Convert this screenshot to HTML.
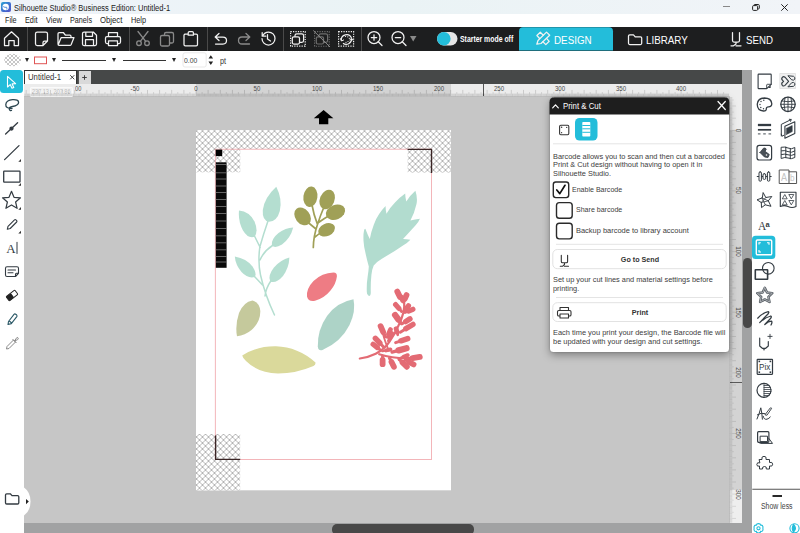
<!DOCTYPE html>
<html><head><meta charset="utf-8"><title>Silhouette Studio</title>
<style>
*{box-sizing:border-box;margin:0;padding:0}
html,body{width:800px;height:533px;overflow:hidden;background:#fff}
body{position:relative;font-family:"Liberation Sans",sans-serif;color:#222}
.a{position:absolute}
.t{position:absolute;white-space:nowrap;transform-origin:0 50%;line-height:1}
svg{position:absolute;overflow:visible}
.ic{fill:none;stroke:#f2f2f2;stroke-width:1.25;stroke-linecap:round;stroke-linejoin:round}
.ig{fill:none;stroke:#8a8a8a;stroke-width:1.3;stroke-linecap:round;stroke-linejoin:round}
.id{fill:none;stroke:#333b42;stroke-width:1.3;stroke-linecap:round;stroke-linejoin:round}
.sep{position:absolute;top:27px;width:1px;height:23.5px;background:#4a4a4a}
.dd{position:absolute;width:0;height:0;border-left:2.7px solid transparent;border-right:2.7px solid transparent;border-top:4.2px solid #222}
</style></head><body>

<!-- TITLE BAR -->
<div class="a" id="titlebar" style="left:0;top:0;width:800px;height:13.700px;background:linear-gradient(90deg,#eff3f9,#eaf3f5 50%,#f1f4f8)"></div>
<div class="a" style="left:1px;top:2px;width:10px;height:9.800px;border-radius:2px;background:linear-gradient(135deg,#2aa3d4,#3f6fd0 55%,#5350c4)"></div>
<svg style="left:1px;top:1.900px" width="10" height="10" viewBox="0 0 10 10"><circle cx="4.700" cy="5" r="3.200" fill="#fff"/><path d="M2.500 4.800Q4 5.800 5.600 5.200Q6.300 6 5.800 7" fill="none" stroke="#3f7fd6" stroke-width=".9" stroke-linecap="round"/></svg>
<span class="t" style="left:14px;top:3.900px;font-size:8.500px;color:#1a1a1a;transform:scaleX(.883)">Silhouette Studio® Business Edition: Untitled-1</span>
<div class="a" style="left:723px;top:6.3px;width:7px;height:1px;background:#888"></div>
<svg style="left:751.5px;top:3.5px" width="8" height="7" viewBox="0 0 8 7"><rect x=".6" y="1.600" width="5" height="4.800" rx="1" fill="none" stroke="#222" stroke-width="1"/><path d="M2 1.600V1.200c0-.4.300-.7.700-.7H6.300c.6 0 1 .4 1 1v2.700c0 .4-.3.700-.7.700H5.800" fill="none" stroke="#222" stroke-width="1"/></svg>
<svg style="left:781px;top:3.600px" width="7" height="7" viewBox="0 0 7 7"><path d="M.3.300l6.400 6.400M6.700.3L.3 6.700" stroke="#222" stroke-width="1" fill="none"/></svg>

<!-- MENU BAR -->
<div class="a" style="left:0;top:13.700px;width:800px;height:13.300px;background:#fff"></div>
<span class="t" style="left:4.500px;top:16.100px;font-size:9px;transform:scaleX(0.8)">File</span>
<span class="t" style="left:24.700px;top:16.100px;font-size:9px;transform:scaleX(0.81)">Edit</span>
<span class="t" style="left:45.600px;top:16.100px;font-size:9px;transform:scaleX(0.82)">View</span>
<span class="t" style="left:70px;top:16.100px;font-size:9px;transform:scaleX(0.8)">Panels</span>
<span class="t" style="left:100px;top:16.100px;font-size:9px;transform:scaleX(0.86)">Object</span>
<span class="t" style="left:131px;top:16.100px;font-size:9px;transform:scaleX(0.81)">Help</span>

<!-- TOOLBAR -->
<div class="a" id="toolbar" style="left:0;top:27px;width:800px;height:23.5px;background:#1d1e1f"></div>
<div class="sep" style="left:27px"></div><div class="sep" style="left:128.500px"></div><div class="sep" style="left:206.500px"></div><div class="sep" style="left:283px"></div><div class="sep" style="left:361px"></div>


<!-- toolbar icons -->
<svg style="left:0;top:0" width="800" height="52" viewBox="0 0 800 52">
<g class="ic">
<path d="M4.500 38.200L11.500 31.800L18.500 38.200V45.500H14.200V40.500H8.800V45.500H4.500Z"/>
<path d="M37.300 32H45.700Q47.500 32 47.500 33.800V41L43 45.500H37.300Q35.500 45.500 35.500 43.700V33.800Q35.500 32 37.300 32ZM47.500 41H44.500Q43 41 43 42.500V45.500"/>
<path d="M58 44.300V33.700Q58 32.500 59.200 32.500H63.300L65.300 35H69.800Q71 35 71 36.200V37.500M58.300 44.600L61.200 37.500H74L71.200 44.500Q70.800 45.400 69.900 45.400H59Q58 45.400 58 44.300"/>
<path d="M84 32H93.300L96.500 35.200V44Q96.500 45.500 95 45.500H84Q82.500 45.500 82.500 44V33.500Q82.500 32 84 32ZM85.800 32.200V36.300H92.500V32.200M85.500 45.300V39.500H93.500V45.300"/>
<path d="M108.500 36.500V32.500H117.500V36.500M108.500 43.500H107Q105.500 43.500 105.500 42V38Q105.500 36.500 107 36.500H119Q120.500 36.500 120.500 38V42Q120.500 43.500 119 43.500H117.500M108.500 40.800H117.500V45.500H108.500Z"/>
<path d="M184.700 34H188M193.500 34H196.200Q197.500 34 197.500 35.300V44.500Q197.500 45.800 196.200 45.800H185.300Q184 45.800 184 44.500V35.300Q184 34 185.300 34M188.200 32.800Q188.200 31.600 189.400 31.600H192.200Q193.400 31.600 193.400 32.800V35.200H188.200Z"/>
<path d="M219 33.500L215.200 37L219 40.500M215.500 37H223Q226.500 37 226.500 40.500Q226.500 44 223 44H215.500"/>
<path d="M267.500 34.500V39L270.500 41M262.500 36Q264.500 32 268.500 32A6.500 6.500 0 1 1 262 38.500M262.200 32.500V36.200H265.800"/>
<circle cx="374" cy="37.500" r="6"/><path d="M378.300 41.800L382 45.500M371.300 37.500H376.700M374 34.800V40.200"/>
<circle cx="398" cy="37.500" r="6"/><path d="M402.300 41.800L406 45.500M395.300 37.500H400.700"/>
</g>
<g class="ig">
<circle cx="139" cy="43.200" r="2.300"/><circle cx="147" cy="43.200" r="2.300"/><path d="M140.300 41.300L148 31.500M145.700 41.300L138 31.500"/>
<rect x="164.500" y="32.500" width="9" height="10.500" rx="1.500"/><rect x="160.500" y="35.500" width="9" height="10.500" rx="1.500" fill="#1e1e1e"/>
<path d="M246 33.500L249.800 37L246 40.500M249.500 37H242Q238.500 37 238.500 40.500Q238.500 44 242 44H249.500"/>
</g>
<!-- group -->
<g fill="none" stroke="#f2f2f2" stroke-width="1.250">
<rect x="290.600" y="31.600" width="14.600" height="14.600" stroke-dasharray="1.200 1.233" stroke-width="1.200"/>
<rect x="295" y="33.800" width="8.600" height="8.600" rx="1.800"/><rect x="292.300" y="36.800" width="7.200" height="7.200" rx="1.500" fill="#1e1e1e"/>
</g>
<g fill="none" stroke="#6e6e6e" stroke-width="1.200">
<rect x="314.600" y="31.600" width="14.600" height="14.600" stroke-dasharray="1.200 1.233" stroke-width="1.100"/>
<rect x="319" y="33.800" width="8.600" height="8.600" rx="1.800"/><rect x="316.300" y="36.800" width="7.200" height="7.200" rx="1.500" fill="#1e1e1e"/>
<path d="M313.300 30.500L330 47" stroke="#8a8a8a" stroke-width="1"/>
</g>
<g fill="none" stroke="#f2f2f2" stroke-width="1.250">
<rect x="338.600" y="31.600" width="15" height="14.600" stroke-dasharray="1.200 1.233" stroke-width="1.200"/>
<path d="M341.300 40.500A5.300 5.300 0 0 1 351.500 38M351.500 38.800A5.300 5.300 0 0 1 343 43.300" stroke-width="1.200"/><path d="M340.300 38.300L341.500 41L344 39.800M349.500 40L351.700 38.300L353 40.500" stroke-width="1"/>
<g fill="#f2f2f2" stroke="none"><circle cx="345.500" cy="36.500" r=".6"/><circle cx="347.800" cy="36.800" r=".6"/><circle cx="349.300" cy="38.300" r=".6"/><circle cx="346" cy="42.300" r=".6"/><circle cx="348" cy="41.500" r=".6"/></g>
</g>
<path d="M410 36H416.500L413.200 41.500Z" fill="#8a8a8a"/>
<!-- toggle -->
<rect x="437" y="32" width="20.500" height="13.600" rx="6.800" fill="#e6e6e6"/><circle cx="443.800" cy="38.800" r="6.800" fill="#23bdda"/>
<!-- design tab -->
<path d="M519 50.500V31.200Q519 27.200 523 27.200H609Q613 27.200 613 31.200V50.500Z" fill="#23bdda"/>
<g class="ic" stroke-width="1.150" stroke="#e6fbff">
<path d="M536.800 44.200L538 40.500L546.500 32.100L549.700 35.200L541 43.500Z"/>
<path d="M539.600 38.500L536.900 35.500L540.300 32.200L543.300 35.200M546.600 38.400L549.200 41.300L545.800 44.600L542.900 41.700"/>
</g>
<!-- library icon -->
<path class="ic" d="M628.500 36Q628.500 34.800 629.700 34.800H633.500L635.200 36.800H640.500Q641.700 36.800 641.700 38V43.300Q641.700 44.500 640.500 44.500H629.700Q628.500 44.500 628.500 43.300Z"/>
<!-- send icon -->
<path class="ic" d="M732.500 32.500V40.500Q732.500 42 734 42H738Q739.500 42 739.500 40.500V32.500M736 42V44L733.500 45.800H731M736 45.800H741" stroke-width="1.300"/>
</svg>
<span class="t" style="left:460px;top:34.500px;font-size:8.500px;font-weight:700;color:#fff;transform:scaleX(.81)">Starter mode off</span>
<span class="t" style="left:554.300px;top:33.800px;font-size:11.700px;color:#fff;transform:scaleX(.84)">DESIGN</span>
<span class="t" style="left:645.500px;top:33.800px;font-size:11.700px;color:#fff;transform:scaleX(.84)">LIBRARY</span>
<span class="t" style="left:745.500px;top:33.800px;font-size:11.700px;color:#fff;transform:scaleX(.83)">SEND</span>

<!-- OPTIONS BAR -->
<div class="a" style="left:0;top:50.500px;width:800px;height:19.500px;background:#fff"></div>


<svg style="left:0;top:0" width="800" height="533" viewBox="0 0 800 533">
<defs>
<pattern id="hx" width="6" height="6" patternUnits="userSpaceOnUse" patternTransform="translate(196.500 131)">
<rect width="6" height="6" fill="#fff"/>
<path d="M-1 -1L7 7M7 -1L-1 7" stroke="#9c9c9c" stroke-width=".75"/>
</pattern>
<pattern id="hx2" width="4" height="4" patternUnits="userSpaceOnUse">
<path d="M0 0L4 4M4 0L0 4" stroke="#b4b4b4" stroke-width=".75"/>
</pattern>
</defs>
<ellipse cx="12.700" cy="60" rx="8.500" ry="6.300" fill="url(#hx2)"/>
<rect x="34.500" y="57" width="12" height="6.700" fill="none" stroke="#e05555" stroke-width="1"/>
<path d="M62 60.500H106M123 60.500H166" stroke="#333" stroke-width="1"/>
<rect x="183" y="52.800" width="23.200" height="14.200" rx="2" fill="#fff" stroke="#e9e9e9" stroke-width="1"/>
<path d="M208.500 58.600L210.800 55.200L213.100 58.600ZM208.500 61.600L210.800 65L213.100 61.600Z" fill="#222"/>
</svg>
<div class="dd" style="left:24.500px;top:58px"></div><div class="dd" style="left:52px;top:58px"></div><div class="dd" style="left:111.500px;top:58px"></div><div class="dd" style="left:171.500px;top:58px"></div>
<span class="t" style="left:184.300px;top:57.200px;font-size:8px;color:#444;transform:scaleX(.85)">0.00</span>
<span class="t" style="left:220px;top:56.500px;font-size:8.500px;color:#333;transform:scaleX(.85)">pt</span>

<!-- TAB BAR -->
<div class="a" style="left:24px;top:70px;width:718.400px;height:13.700px;background:#464848"></div>
<div class="a" style="left:24.200px;top:70px;width:53.300px;height:13.700px;background:#fff;border:1px solid #333;border-bottom:none"></div>
<span class="t" style="left:28px;top:72.600px;font-size:9px;color:#333;transform:scaleX(.86)">Untitled-1</span>
<svg style="left:69.500px;top:74.500px" width="4.500" height="4.500" viewBox="0 0 4.500 4.500"><path d="M.2.200l4.100 4.100M4.300.2L.2 4.300" stroke="#333" stroke-width=".9"/></svg>
<div class="a" style="left:77.500px;top:70.500px;width:13.700px;height:13.200px;background:#d9d9d9;border-left:1px solid #555"></div>
<svg style="left:82px;top:74.500px" width="5" height="5" viewBox="0 0 5 5"><path d="M2.500.2v4.600M.2 2.500h4.600" stroke="#333" stroke-width=".9"/></svg>

<!-- CANVAS -->
<div class="a" id="canvas" style="left:24px;top:83.700px;width:718.400px;height:439.300px;background:#c6c6c6"></div>

<!-- RULERS -->
<div class="a" style="left:24px;top:83.700px;width:705.500px;height:12.700px;background:#ececec"></div>
<div class="a" style="left:196px;top:83.700px;width:255px;height:12.700px;background:#d3d3d3"></div>
<span class="t" style="left:125.4px;top:85.500px;width:20px;text-align:center;font-size:6.600px;color:#4a4a4a;transform-origin:50% 50%;transform:scaleX(.92)">-50</span>
<span class="t" style="left:186.0px;top:85.500px;width:20px;text-align:center;font-size:6.600px;color:#4a4a4a;transform-origin:50% 50%;transform:scaleX(.92)">0</span>
<span class="t" style="left:246.6px;top:85.500px;width:20px;text-align:center;font-size:6.600px;color:#4a4a4a;transform-origin:50% 50%;transform:scaleX(.92)">50</span>
<span class="t" style="left:307.3px;top:85.500px;width:20px;text-align:center;font-size:6.600px;color:#4a4a4a;transform-origin:50% 50%;transform:scaleX(.92)">100</span>
<span class="t" style="left:367.9px;top:85.500px;width:20px;text-align:center;font-size:6.600px;color:#4a4a4a;transform-origin:50% 50%;transform:scaleX(.92)">150</span>
<span class="t" style="left:428.6px;top:85.500px;width:20px;text-align:center;font-size:6.600px;color:#4a4a4a;transform-origin:50% 50%;transform:scaleX(.92)">200</span>
<span class="t" style="left:489.2px;top:85.500px;width:20px;text-align:center;font-size:6.600px;color:#4a4a4a;transform-origin:50% 50%;transform:scaleX(.92)">250</span>
<span class="t" style="left:549.8px;top:85.500px;width:20px;text-align:center;font-size:6.600px;color:#4a4a4a;transform-origin:50% 50%;transform:scaleX(.92)">300</span>
<span class="t" style="left:610.5px;top:85.500px;width:20px;text-align:center;font-size:6.600px;color:#4a4a4a;transform-origin:50% 50%;transform:scaleX(.92)">350</span>
<span class="t" style="left:671.1px;top:85.500px;width:20px;text-align:center;font-size:6.600px;color:#4a4a4a;transform-origin:50% 50%;transform:scaleX(.92)">400</span>
<span class="t" style="left:75px;top:85.500px;font-size:6.300px;color:#555;transform:scaleX(.9)">00</span>
<div class="a" style="left:29.500px;top:86.500px;width:43px;height:10px;background:#f2f2f2;border:1px solid #fafafa;border-radius:1px"></div>
<span class="t" style="left:32px;top:88.500px;font-size:6.300px;color:#bdbdbd;transform:scaleX(.88)">237.13 , 207.86</span>
<div class="a" style="left:483px;top:84px;width:1.300px;height:12.400px;background:#555"></div>
<div class="a" style="left:729.500px;top:83.700px;width:12.900px;height:439.300px;background:#eeeeee"></div>
<div class="a" style="left:729.500px;top:130.300px;width:12.900px;height:360px;background:#d3d3d3"></div>
<div class="a" style="left:729.800px;top:381.600px;width:12.600px;height:1.200px;background:#5a5a5a"></div>
<span class="t" style="left:728.300px;top:126.8px;width:20px;text-align:center;font-size:6.800px;color:#4a4a4a;transform-origin:50% 50%;transform:rotate(90deg) scaleX(.92)">0</span>
<span class="t" style="left:728.300px;top:187.4px;width:20px;text-align:center;font-size:6.800px;color:#4a4a4a;transform-origin:50% 50%;transform:rotate(90deg) scaleX(.92)">50</span>
<span class="t" style="left:728.300px;top:248.1px;width:20px;text-align:center;font-size:6.800px;color:#4a4a4a;transform-origin:50% 50%;transform:rotate(90deg) scaleX(.92)">100</span>
<span class="t" style="left:728.300px;top:308.7px;width:20px;text-align:center;font-size:6.800px;color:#4a4a4a;transform-origin:50% 50%;transform:rotate(90deg) scaleX(.92)">150</span>
<span class="t" style="left:728.300px;top:369.4px;width:20px;text-align:center;font-size:6.800px;color:#4a4a4a;transform-origin:50% 50%;transform:rotate(90deg) scaleX(.92)">200</span>
<span class="t" style="left:728.300px;top:430.0px;width:20px;text-align:center;font-size:6.800px;color:#4a4a4a;transform-origin:50% 50%;transform:rotate(90deg) scaleX(.92)">250</span>
<span class="t" style="left:728.300px;top:490.6px;width:20px;text-align:center;font-size:6.800px;color:#4a4a4a;transform-origin:50% 50%;transform:rotate(90deg) scaleX(.92)">300</span>
<div class="a" style="left:742.400px;top:70px;width:9.900px;height:463px;background:#a1a2a3"></div>
<div class="a" style="left:24px;top:523px;width:728.300px;height:10px;background:#a1a2a3"></div>
<div class="a" style="left:743px;top:258px;width:9.300px;height:69.500px;background:#484848;border-radius:4.600px"></div>
<div class="a" style="left:331.500px;top:523.500px;width:142.500px;height:11px;background:#484848;border-radius:5px"></div>

<svg style="left:0;top:0" width="800" height="533" viewBox="0 0 800 533"><path d="M25.0 96.400v-2.8M26.2 96.400v-6.5M27.4 96.400v-2.8M28.6 96.400v-2.8M29.8 96.400v-2.8M31.1 96.400v-2.8M32.3 96.400v-4.2M33.5 96.400v-2.8M34.7 96.400v-2.8M35.9 96.400v-2.8M37.1 96.400v-2.8M38.3 96.400v-6.5M39.5 96.400v-2.8M40.8 96.400v-2.8M42.0 96.400v-2.8M43.2 96.400v-2.8M44.4 96.400v-4.2M45.6 96.400v-2.8M46.8 96.400v-2.8M48.0 96.400v-2.8M49.3 96.400v-2.8M50.5 96.400v-6.5M51.7 96.400v-2.8M52.9 96.400v-2.8M54.1 96.400v-2.8M55.3 96.400v-2.8M56.5 96.400v-4.2M57.7 96.400v-2.8M59.0 96.400v-2.8M60.2 96.400v-2.8M61.4 96.400v-2.8M62.6 96.400v-6.5M63.8 96.400v-2.8M65.0 96.400v-2.8M66.2 96.400v-2.8M67.4 96.400v-2.8M68.7 96.400v-4.2M69.9 96.400v-2.8M71.1 96.400v-2.8M72.3 96.400v-2.8M73.5 96.400v-2.8M74.7 96.400v-6.5M75.9 96.400v-2.8M77.1 96.400v-2.8M78.4 96.400v-2.8M79.6 96.400v-2.8M80.8 96.400v-4.2M82.0 96.400v-2.8M83.2 96.400v-2.8M84.4 96.400v-2.8M85.6 96.400v-2.8M86.8 96.400v-6.5M88.1 96.400v-2.8M89.3 96.400v-2.8M90.5 96.400v-2.8M91.7 96.400v-2.8M92.9 96.400v-4.2M94.1 96.400v-2.8M95.3 96.400v-2.8M96.6 96.400v-2.8M97.8 96.400v-2.8M99.0 96.400v-6.5M100.2 96.400v-2.8M101.4 96.400v-2.8M102.6 96.400v-2.8M103.8 96.400v-2.8M105.0 96.400v-4.2M106.3 96.400v-2.8M107.5 96.400v-2.8M108.7 96.400v-2.8M109.9 96.400v-2.8M111.1 96.400v-6.5M112.3 96.400v-2.8M113.5 96.400v-2.8M114.7 96.400v-2.8M116.0 96.400v-2.8M117.2 96.400v-4.2M118.4 96.400v-2.8M119.6 96.400v-2.8M120.8 96.400v-2.8M122.0 96.400v-2.8M123.2 96.400v-6.5M124.4 96.400v-2.8M125.7 96.400v-2.8M126.9 96.400v-2.8M128.1 96.400v-2.8M129.3 96.400v-4.2M130.5 96.400v-2.8M131.7 96.400v-2.8M132.9 96.400v-2.8M134.1 96.400v-2.8M135.4 96.400v-6.5M136.6 96.400v-2.8M137.8 96.400v-2.8M139.0 96.400v-2.8M140.2 96.400v-2.8M141.4 96.400v-4.2M142.6 96.400v-2.8M143.8 96.400v-2.8M145.1 96.400v-2.8M146.3 96.400v-2.8M147.5 96.400v-6.5M148.7 96.400v-2.8M149.9 96.400v-2.8M151.1 96.400v-2.8M152.3 96.400v-2.8M153.6 96.400v-4.2M154.8 96.400v-2.8M156.0 96.400v-2.8M157.2 96.400v-2.8M158.4 96.400v-2.8M159.6 96.400v-6.5M160.8 96.400v-2.8M162.0 96.400v-2.8M163.3 96.400v-2.8M164.5 96.400v-2.8M165.7 96.400v-4.2M166.9 96.400v-2.8M168.1 96.400v-2.8M169.3 96.400v-2.8M170.5 96.400v-2.8M171.7 96.400v-6.5M173.0 96.400v-2.8M174.2 96.400v-2.8M175.4 96.400v-2.8M176.6 96.400v-2.8M177.8 96.400v-4.2M179.0 96.400v-2.8M180.2 96.400v-2.8M181.4 96.400v-2.8M182.7 96.400v-2.8M183.9 96.400v-6.5M185.1 96.400v-2.8M186.3 96.400v-2.8M187.5 96.400v-2.8M188.7 96.400v-2.8M189.9 96.400v-4.2M191.1 96.400v-2.8M192.4 96.400v-2.8M193.6 96.400v-2.8M194.8 96.400v-2.8M196.0 96.400v-6.5M197.2 96.400v-2.8M198.4 96.400v-2.8M199.6 96.400v-2.8M200.9 96.400v-2.8M202.1 96.400v-4.2M203.3 96.400v-2.8M204.5 96.400v-2.8M205.7 96.400v-2.8M206.9 96.400v-2.8M208.1 96.400v-6.5M209.3 96.400v-2.8M210.6 96.400v-2.8M211.8 96.400v-2.8M213.0 96.400v-2.8M214.2 96.400v-4.2M215.4 96.400v-2.8M216.6 96.400v-2.8M217.8 96.400v-2.8M219.0 96.400v-2.8M220.3 96.400v-6.5M221.5 96.400v-2.8M222.7 96.400v-2.8M223.9 96.400v-2.8M225.1 96.400v-2.8M226.3 96.400v-4.2M227.5 96.400v-2.8M228.7 96.400v-2.8M230.0 96.400v-2.8M231.2 96.400v-2.8M232.4 96.400v-6.5M233.6 96.400v-2.8M234.8 96.400v-2.8M236.0 96.400v-2.8M237.2 96.400v-2.8M238.4 96.400v-4.2M239.7 96.400v-2.8M240.9 96.400v-2.8M242.1 96.400v-2.8M243.3 96.400v-2.8M244.5 96.400v-6.5M245.7 96.400v-2.8M246.9 96.400v-2.8M248.2 96.400v-2.8M249.4 96.400v-2.8M250.6 96.400v-4.2M251.8 96.400v-2.8M253.0 96.400v-2.8M254.2 96.400v-2.8M255.4 96.400v-2.8M256.6 96.400v-6.5M257.9 96.400v-2.8M259.1 96.400v-2.8M260.3 96.400v-2.8M261.5 96.400v-2.8M262.7 96.400v-4.2M263.9 96.400v-2.8M265.1 96.400v-2.8M266.3 96.400v-2.8M267.6 96.400v-2.8M268.8 96.400v-6.5M270.0 96.400v-2.8M271.2 96.400v-2.8M272.4 96.400v-2.8M273.6 96.400v-2.8M274.8 96.400v-4.2M276.0 96.400v-2.8M277.3 96.400v-2.8M278.5 96.400v-2.8M279.7 96.400v-2.8M280.9 96.400v-6.5M282.1 96.400v-2.8M283.3 96.400v-2.8M284.5 96.400v-2.8M285.7 96.400v-2.8M287.0 96.400v-4.2M288.2 96.400v-2.8M289.4 96.400v-2.8M290.6 96.400v-2.8M291.8 96.400v-2.8M293.0 96.400v-6.5M294.2 96.400v-2.8M295.4 96.400v-2.8M296.7 96.400v-2.8M297.9 96.400v-2.8M299.1 96.400v-4.2M300.3 96.400v-2.8M301.5 96.400v-2.8M302.7 96.400v-2.8M303.9 96.400v-2.8M305.2 96.400v-6.5M306.4 96.400v-2.8M307.6 96.400v-2.8M308.8 96.400v-2.8M310.0 96.400v-2.8M311.2 96.400v-4.2M312.4 96.400v-2.8M313.6 96.400v-2.8M314.9 96.400v-2.8M316.1 96.400v-2.8M317.3 96.400v-6.5M318.5 96.400v-2.8M319.7 96.400v-2.8M320.9 96.400v-2.8M322.1 96.400v-2.8M323.3 96.400v-4.2M324.6 96.400v-2.8M325.8 96.400v-2.8M327.0 96.400v-2.8M328.2 96.400v-2.8M329.4 96.400v-6.5M330.6 96.400v-2.8M331.8 96.400v-2.8M333.0 96.400v-2.8M334.3 96.400v-2.8M335.5 96.400v-4.2M336.7 96.400v-2.8M337.9 96.400v-2.8M339.1 96.400v-2.8M340.3 96.400v-2.8M341.5 96.400v-6.5M342.7 96.400v-2.8M344.0 96.400v-2.8M345.2 96.400v-2.8M346.4 96.400v-2.8M347.6 96.400v-4.2M348.8 96.400v-2.8M350.0 96.400v-2.8M351.2 96.400v-2.8M352.5 96.400v-2.8M353.7 96.400v-6.5M354.9 96.400v-2.8M356.1 96.400v-2.8M357.3 96.400v-2.8M358.5 96.400v-2.8M359.7 96.400v-4.2M360.9 96.400v-2.8M362.2 96.400v-2.8M363.4 96.400v-2.8M364.6 96.400v-2.8M365.8 96.400v-6.5M367.0 96.400v-2.8M368.2 96.400v-2.8M369.4 96.400v-2.8M370.6 96.400v-2.8M371.9 96.400v-4.2M373.1 96.400v-2.8M374.3 96.400v-2.8M375.5 96.400v-2.8M376.7 96.400v-2.8M377.9 96.400v-6.5M379.1 96.400v-2.8M380.3 96.400v-2.8M381.6 96.400v-2.8M382.8 96.400v-2.8M384.0 96.400v-4.2M385.2 96.400v-2.8M386.4 96.400v-2.8M387.6 96.400v-2.8M388.8 96.400v-2.8M390.0 96.400v-6.5M391.3 96.400v-2.8M392.5 96.400v-2.8M393.7 96.400v-2.8M394.9 96.400v-2.8M396.1 96.400v-4.2M397.3 96.400v-2.8M398.5 96.400v-2.8M399.8 96.400v-2.8M401.0 96.400v-2.8M402.2 96.400v-6.5M403.4 96.400v-2.8M404.6 96.400v-2.8M405.8 96.400v-2.8M407.0 96.400v-2.8M408.2 96.400v-4.2M409.5 96.400v-2.8M410.7 96.400v-2.8M411.9 96.400v-2.8M413.1 96.400v-2.8M414.3 96.400v-6.5M415.5 96.400v-2.8M416.7 96.400v-2.8M417.9 96.400v-2.8M419.2 96.400v-2.8M420.4 96.400v-4.2M421.6 96.400v-2.8M422.8 96.400v-2.8M424.0 96.400v-2.8M425.2 96.400v-2.8M426.4 96.400v-6.5M427.6 96.400v-2.8M428.9 96.400v-2.8M430.1 96.400v-2.8M431.3 96.400v-2.8M432.5 96.400v-4.2M433.7 96.400v-2.8M434.9 96.400v-2.8M436.1 96.400v-2.8M437.3 96.400v-2.8M438.6 96.400v-6.5M439.8 96.400v-2.8M441.0 96.400v-2.8M442.2 96.400v-2.8M443.4 96.400v-2.8M444.6 96.400v-4.2M445.8 96.400v-2.8M447.0 96.400v-2.8M448.3 96.400v-2.8M449.5 96.400v-2.8M450.7 96.400v-6.5M451.9 96.400v-2.8M453.1 96.400v-2.8M454.3 96.400v-2.8M455.5 96.400v-2.8M456.8 96.400v-4.2M458.0 96.400v-2.8M459.2 96.400v-2.8M460.4 96.400v-2.8M461.6 96.400v-2.8M462.8 96.400v-6.5M464.0 96.400v-2.8M465.2 96.400v-2.8M466.5 96.400v-2.8M467.7 96.400v-2.8M468.9 96.400v-4.2M470.1 96.400v-2.8M471.3 96.400v-2.8M472.5 96.400v-2.8M473.7 96.400v-2.8M474.9 96.400v-6.5M476.2 96.400v-2.8M477.4 96.400v-2.8M478.6 96.400v-2.8M479.8 96.400v-2.8M481.0 96.400v-4.2M482.2 96.400v-2.8M483.4 96.400v-2.8M484.6 96.400v-2.8M485.9 96.400v-2.8M487.1 96.400v-6.5M488.3 96.400v-2.8M489.5 96.400v-2.8M490.7 96.400v-2.8M491.9 96.400v-2.8M493.1 96.400v-4.2M494.3 96.400v-2.8M495.6 96.400v-2.8M496.8 96.400v-2.8M498.0 96.400v-2.8M499.2 96.400v-6.5M500.4 96.400v-2.8M501.6 96.400v-2.8M502.8 96.400v-2.8M504.1 96.400v-2.8M505.3 96.400v-4.2M506.5 96.400v-2.8M507.7 96.400v-2.8M508.9 96.400v-2.8M510.1 96.400v-2.8M511.3 96.400v-6.5M512.5 96.400v-2.8M513.8 96.400v-2.8M515.0 96.400v-2.8M516.2 96.400v-2.8M517.4 96.400v-4.2M518.6 96.400v-2.8M519.8 96.400v-2.8M521.0 96.400v-2.8M522.2 96.400v-2.8M523.5 96.400v-6.5M524.7 96.400v-2.8M525.9 96.400v-2.8M527.1 96.400v-2.8M528.3 96.400v-2.8M529.5 96.400v-4.2M530.7 96.400v-2.8M531.9 96.400v-2.8M533.2 96.400v-2.8M534.4 96.400v-2.8M535.6 96.400v-6.5M536.8 96.400v-2.8M538.0 96.400v-2.8M539.2 96.400v-2.8M540.4 96.400v-2.8M541.6 96.400v-4.2M542.9 96.400v-2.8M544.1 96.400v-2.8M545.3 96.400v-2.8M546.5 96.400v-2.8M547.7 96.400v-6.5M548.9 96.400v-2.8M550.1 96.400v-2.8M551.4 96.400v-2.8M552.6 96.400v-2.8M553.8 96.400v-4.2M555.0 96.400v-2.8M556.2 96.400v-2.8M557.4 96.400v-2.8M558.6 96.400v-2.8M559.8 96.400v-6.5M561.1 96.400v-2.8M562.3 96.400v-2.8M563.5 96.400v-2.8M564.7 96.400v-2.8M565.9 96.400v-4.2M567.1 96.400v-2.8M568.3 96.400v-2.8M569.5 96.400v-2.8M570.8 96.400v-2.8M572.0 96.400v-6.5M573.2 96.400v-2.8M574.4 96.400v-2.8M575.6 96.400v-2.8M576.8 96.400v-2.8M578.0 96.400v-4.2M579.2 96.400v-2.8M580.5 96.400v-2.8M581.7 96.400v-2.8M582.9 96.400v-2.8M584.1 96.400v-6.5M585.3 96.400v-2.8M586.5 96.400v-2.8M587.7 96.400v-2.8M588.9 96.400v-2.8M590.2 96.400v-4.2M591.4 96.400v-2.8M592.6 96.400v-2.8M593.8 96.400v-2.8M595.0 96.400v-2.8M596.2 96.400v-6.5M597.4 96.400v-2.8M598.6 96.400v-2.8M599.9 96.400v-2.8M601.1 96.400v-2.8M602.3 96.400v-4.2M603.5 96.400v-2.8M604.7 96.400v-2.8M605.9 96.400v-2.8M607.1 96.400v-2.8M608.4 96.400v-6.5M609.6 96.400v-2.8M610.8 96.400v-2.8M612.0 96.400v-2.8M613.2 96.400v-2.8M614.4 96.400v-4.2M615.6 96.400v-2.8M616.8 96.400v-2.8M618.1 96.400v-2.8M619.3 96.400v-2.8M620.5 96.400v-6.5M621.7 96.400v-2.8M622.9 96.400v-2.8M624.1 96.400v-2.8M625.3 96.400v-2.8M626.5 96.400v-4.2M627.8 96.400v-2.8M629.0 96.400v-2.8M630.2 96.400v-2.8M631.4 96.400v-2.8M632.6 96.400v-6.5M633.8 96.400v-2.8M635.0 96.400v-2.8M636.2 96.400v-2.8M637.5 96.400v-2.8M638.7 96.400v-4.2M639.9 96.400v-2.8M641.1 96.400v-2.8M642.3 96.400v-2.8M643.5 96.400v-2.8M644.7 96.400v-6.5M645.9 96.400v-2.8M647.2 96.400v-2.8M648.4 96.400v-2.8M649.6 96.400v-2.8M650.8 96.400v-4.2M652.0 96.400v-2.8M653.2 96.400v-2.8M654.4 96.400v-2.8M655.7 96.400v-2.8M656.9 96.400v-6.5M658.1 96.400v-2.8M659.3 96.400v-2.8M660.5 96.400v-2.8M661.7 96.400v-2.8M662.9 96.400v-4.2M664.1 96.400v-2.8M665.4 96.400v-2.8M666.6 96.400v-2.8M667.8 96.400v-2.8M669.0 96.400v-6.5M670.2 96.400v-2.8M671.4 96.400v-2.8M672.6 96.400v-2.8M673.8 96.400v-2.8M675.1 96.400v-4.2M676.3 96.400v-2.8M677.5 96.400v-2.8M678.7 96.400v-2.8M679.9 96.400v-2.8M681.1 96.400v-6.5M682.3 96.400v-2.8M683.5 96.400v-2.8M684.8 96.400v-2.8M686.0 96.400v-2.8M687.2 96.400v-4.2M688.4 96.400v-2.8M689.6 96.400v-2.8M690.8 96.400v-2.8M692.0 96.400v-2.8M693.2 96.400v-6.5M694.5 96.400v-2.8M695.7 96.400v-2.8M696.9 96.400v-2.8M698.1 96.400v-2.8M699.3 96.400v-4.2M700.5 96.400v-2.8M701.7 96.400v-2.8M703.0 96.400v-2.8M704.2 96.400v-2.8M705.4 96.400v-6.5M706.6 96.400v-2.8M707.8 96.400v-2.8M709.0 96.400v-2.8M710.2 96.400v-2.8M711.4 96.400v-4.2M712.7 96.400v-2.8M713.9 96.400v-2.8M715.1 96.400v-2.8M716.3 96.400v-2.8M717.5 96.400v-6.5M718.7 96.400v-2.8M719.9 96.400v-2.8M721.1 96.400v-2.8M722.4 96.400v-2.8M723.6 96.400v-4.2M724.8 96.400v-2.8M726.0 96.400v-2.8M727.2 96.400v-2.8M728.4 96.400v-2.8" stroke="#000" stroke-opacity=".26" stroke-width=".55" fill="none"/><path d="M729.500 97.6h2.8M729.500 98.8h2.8M729.500 100.0h4.2M729.500 101.2h2.8M729.500 102.4h2.8M729.500 103.6h2.8M729.500 104.8h2.8M729.500 106.0h6.5M729.500 107.3h2.8M729.500 108.5h2.8M729.500 109.7h2.8M729.500 110.9h2.8M729.500 112.1h4.2M729.500 113.3h2.8M729.500 114.5h2.8M729.500 115.7h2.8M729.500 117.0h2.8M729.500 118.2h6.5M729.500 119.4h2.8M729.500 120.6h2.8M729.500 121.8h2.8M729.500 123.0h2.8M729.500 124.2h4.2M729.500 125.4h2.8M729.500 126.7h2.8M729.500 127.9h2.8M729.500 129.1h2.8M729.500 130.3h6.5M729.500 131.5h2.8M729.500 132.7h2.8M729.500 133.9h2.8M729.500 135.2h2.8M729.500 136.4h4.2M729.500 137.6h2.8M729.500 138.8h2.8M729.500 140.0h2.8M729.500 141.2h2.8M729.500 142.4h6.5M729.500 143.6h2.8M729.500 144.9h2.8M729.500 146.1h2.8M729.500 147.3h2.8M729.500 148.5h4.2M729.500 149.7h2.8M729.500 150.9h2.8M729.500 152.1h2.8M729.500 153.3h2.8M729.500 154.6h6.5M729.500 155.8h2.8M729.500 157.0h2.8M729.500 158.2h2.8M729.500 159.4h2.8M729.500 160.6h4.2M729.500 161.8h2.8M729.500 163.0h2.8M729.500 164.3h2.8M729.500 165.5h2.8M729.500 166.7h6.5M729.500 167.9h2.8M729.500 169.1h2.8M729.500 170.3h2.8M729.500 171.5h2.8M729.500 172.7h4.2M729.500 174.0h2.8M729.500 175.2h2.8M729.500 176.4h2.8M729.500 177.6h2.8M729.500 178.8h6.5M729.500 180.0h2.8M729.500 181.2h2.8M729.500 182.5h2.8M729.500 183.7h2.8M729.500 184.9h4.2M729.500 186.1h2.8M729.500 187.3h2.8M729.500 188.5h2.8M729.500 189.7h2.8M729.500 190.9h6.5M729.500 192.2h2.8M729.500 193.4h2.8M729.500 194.6h2.8M729.500 195.8h2.8M729.500 197.0h4.2M729.500 198.2h2.8M729.500 199.4h2.8M729.500 200.6h2.8M729.500 201.9h2.8M729.500 203.1h6.5M729.500 204.3h2.8M729.500 205.5h2.8M729.500 206.7h2.8M729.500 207.9h2.8M729.500 209.1h4.2M729.500 210.3h2.8M729.500 211.6h2.8M729.500 212.8h2.8M729.500 214.0h2.8M729.500 215.2h6.5M729.500 216.4h2.8M729.500 217.6h2.8M729.500 218.8h2.8M729.500 220.0h2.8M729.500 221.3h4.2M729.500 222.5h2.8M729.500 223.7h2.8M729.500 224.9h2.8M729.500 226.1h2.8M729.500 227.3h6.5M729.500 228.5h2.8M729.500 229.7h2.8M729.500 231.0h2.8M729.500 232.2h2.8M729.500 233.4h4.2M729.500 234.6h2.8M729.500 235.8h2.8M729.500 237.0h2.8M729.500 238.2h2.8M729.500 239.5h6.5M729.500 240.7h2.8M729.500 241.9h2.8M729.500 243.1h2.8M729.500 244.3h2.8M729.500 245.5h4.2M729.500 246.7h2.8M729.500 247.9h2.8M729.500 249.2h2.8M729.500 250.4h2.8M729.500 251.6h6.5M729.500 252.8h2.8M729.500 254.0h2.8M729.500 255.2h2.8M729.500 256.4h2.8M729.500 257.6h4.2M729.500 258.9h2.8M729.500 260.1h2.8M729.500 261.3h2.8M729.500 262.5h2.8M729.500 263.7h6.5M729.500 264.9h2.8M729.500 266.1h2.8M729.500 267.3h2.8M729.500 268.6h2.8M729.500 269.8h4.2M729.500 271.0h2.8M729.500 272.2h2.8M729.500 273.4h2.8M729.500 274.6h2.8M729.500 275.8h6.5M729.500 277.0h2.8M729.500 278.3h2.8M729.500 279.5h2.8M729.500 280.7h2.8M729.500 281.9h4.2M729.500 283.1h2.8M729.500 284.3h2.8M729.500 285.5h2.8M729.500 286.8h2.8M729.500 288.0h6.5M729.500 289.2h2.8M729.500 290.4h2.8M729.500 291.6h2.8M729.500 292.8h2.8M729.500 294.0h4.2M729.500 295.2h2.8M729.500 296.5h2.8M729.500 297.7h2.8M729.500 298.9h2.8M729.500 300.1h6.5M729.500 301.3h2.8M729.500 302.5h2.8M729.500 303.7h2.8M729.500 304.9h2.8M729.500 306.2h4.2M729.500 307.4h2.8M729.500 308.6h2.8M729.500 309.8h2.8M729.500 311.0h2.8M729.500 312.2h6.5M729.500 313.4h2.8M729.500 314.6h2.8M729.500 315.9h2.8M729.500 317.1h2.8M729.500 318.3h4.2M729.500 319.5h2.8M729.500 320.7h2.8M729.500 321.9h2.8M729.500 323.1h2.8M729.500 324.3h6.5M729.500 325.6h2.8M729.500 326.8h2.8M729.500 328.0h2.8M729.500 329.2h2.8M729.500 330.4h4.2M729.500 331.6h2.8M729.500 332.8h2.8M729.500 334.1h2.8M729.500 335.3h2.8M729.500 336.5h6.5M729.500 337.7h2.8M729.500 338.9h2.8M729.500 340.1h2.8M729.500 341.3h2.8M729.500 342.5h4.2M729.500 343.8h2.8M729.500 345.0h2.8M729.500 346.2h2.8M729.500 347.4h2.8M729.500 348.6h6.5M729.500 349.8h2.8M729.500 351.0h2.8M729.500 352.2h2.8M729.500 353.5h2.8M729.500 354.7h4.2M729.500 355.9h2.8M729.500 357.1h2.8M729.500 358.3h2.8M729.500 359.5h2.8M729.500 360.7h6.5M729.500 361.9h2.8M729.500 363.2h2.8M729.500 364.4h2.8M729.500 365.6h2.8M729.500 366.8h4.2M729.500 368.0h2.8M729.500 369.2h2.8M729.500 370.4h2.8M729.500 371.6h2.8M729.500 372.9h6.5M729.500 374.1h2.8M729.500 375.3h2.8M729.500 376.5h2.8M729.500 377.7h2.8M729.500 378.9h4.2M729.500 380.1h2.8M729.500 381.3h2.8M729.500 382.6h2.8M729.500 383.8h2.8M729.500 385.0h6.5M729.500 386.2h2.8M729.500 387.4h2.8M729.500 388.6h2.8M729.500 389.8h2.8M729.500 391.1h4.2M729.500 392.3h2.8M729.500 393.5h2.8M729.500 394.7h2.8M729.500 395.9h2.8M729.500 397.1h6.5M729.500 398.3h2.8M729.500 399.5h2.8M729.500 400.8h2.8M729.500 402.0h2.8M729.500 403.2h4.2M729.500 404.4h2.8M729.500 405.6h2.8M729.500 406.8h2.8M729.500 408.0h2.8M729.500 409.2h6.5M729.500 410.5h2.8M729.500 411.7h2.8M729.500 412.9h2.8M729.500 414.1h2.8M729.500 415.3h4.2M729.500 416.5h2.8M729.500 417.7h2.8M729.500 418.9h2.8M729.500 420.2h2.8M729.500 421.4h6.5M729.500 422.6h2.8M729.500 423.8h2.8M729.500 425.0h2.8M729.500 426.2h2.8M729.500 427.4h4.2M729.500 428.6h2.8M729.500 429.9h2.8M729.500 431.1h2.8M729.500 432.3h2.8M729.500 433.5h6.5M729.500 434.7h2.8M729.500 435.9h2.8M729.500 437.1h2.8M729.500 438.4h2.8M729.500 439.6h4.2M729.500 440.8h2.8M729.500 442.0h2.8M729.500 443.2h2.8M729.500 444.4h2.8M729.500 445.6h6.5M729.500 446.8h2.8M729.500 448.1h2.8M729.500 449.3h2.8M729.500 450.5h2.8M729.500 451.7h4.2M729.500 452.9h2.8M729.500 454.1h2.8M729.500 455.3h2.8M729.500 456.5h2.8M729.500 457.8h6.5M729.500 459.0h2.8M729.500 460.2h2.8M729.500 461.4h2.8M729.500 462.6h2.8M729.500 463.8h4.2M729.500 465.0h2.8M729.500 466.2h2.8M729.500 467.5h2.8M729.500 468.7h2.8M729.500 469.9h6.5M729.500 471.1h2.8M729.500 472.3h2.8M729.500 473.5h2.8M729.500 474.7h2.8M729.500 475.9h4.2M729.500 477.2h2.8M729.500 478.4h2.8M729.500 479.6h2.8M729.500 480.8h2.8M729.500 482.0h6.5M729.500 483.2h2.8M729.500 484.4h2.8M729.500 485.7h2.8M729.500 486.9h2.8M729.500 488.1h4.2M729.500 489.3h2.8M729.500 490.5h2.8M729.500 491.7h2.8M729.500 492.9h2.8M729.500 494.1h6.5M729.500 495.4h2.8M729.500 496.6h2.8M729.500 497.8h2.8M729.500 499.0h2.8M729.500 500.2h4.2M729.500 501.4h2.8M729.500 502.6h2.8M729.500 503.8h2.8M729.500 505.1h2.8M729.500 506.3h6.5M729.500 507.5h2.8M729.500 508.7h2.8M729.500 509.9h2.8M729.500 511.1h2.8M729.500 512.3h4.2M729.500 513.5h2.8M729.500 514.8h2.8M729.500 516.0h2.8M729.500 517.2h2.8M729.500 518.4h6.5M729.500 519.6h2.8M729.500 520.8h2.8M729.500 522.0h2.8" stroke="#000" stroke-opacity=".2" stroke-width=".55" fill="none"/></svg>
<!-- LEFT TOOLS -->
<div class="a" style="left:0;top:69.500px;width:24px;height:463.500px;background:#fff"></div>
<div class="a" style="left:0;top:69.600px;width:23.400px;height:23.400px;background:#23bdda;border-radius:3.500px"></div>
<svg style="left:0;top:0" width="32" height="533" viewBox="0 0 32 533">
<path d="M7.500 76.300V87L10.200 84.600L12 88.300L13.800 87.500L12.100 83.900L15.600 83.700Z" fill="none" stroke="#fff" stroke-width="1.100" stroke-linejoin="round"/>
<g class="id">
<path d="M12 108.500Q5.500 108.500 5.800 104.500Q6.200 100.300 12.500 99.700Q18.500 99.300 18.600 102.300Q18.600 105.500 12.500 106.500Q9 107 9.300 109Q9.800 111 11.500 110.500" stroke="#2c4650"/>
<path d="M5.600 134L17.600 122.800" /><circle cx="11.500" cy="128.600" r="1.500" fill="#333b42"/>
<path d="M4.600 159.600L19 145.600"/>
<rect x="3.700" y="171.200" width="16.300" height="11" rx=".5"/>
<path d="M11.500 191.300L14 197.300L20.500 197.800L15.600 202L17.100 208.300L11.500 204.900L5.900 208.300L7.400 202L2.500 197.800L9 197.300Z" stroke-width="1.200"/>
<path d="M7.300 229.300L8 226.300L14.500 219.800Q15.200 219.200 15.900 219.800L16.700 220.600Q17.300 221.300 16.700 222L10.200 228.500Z" stroke-width="1.100"/>
<path d="M17 242.300V253.500" stroke-width="1"/>
<path d="M7 266.800H17Q18.500 266.800 18.500 268.300V273.300L15.500 276.500H7Q5.500 276.500 5.500 275V268.300Q5.500 266.800 7 266.800ZM18.500 273.300H16.500Q15.500 273.300 15.500 274.300V276.500M8 270H15.500M8 272.800H13" stroke-width="1.100"/>
</g>
<path d="M18.300 161.800H21V159.100ZM18.300 185.800H21V183.100ZM18.300 209.800H21V207.100ZM18.300 233.500H21V230.800Z" fill="#333"/>
<!-- eraser -->
<g transform="rotate(-38 12 295.500)"><rect x="6.500" y="292.800" width="11" height="5.400" rx="1" fill="#fff" stroke="#222" stroke-width="1"/><rect x="6.500" y="292.800" width="6" height="5.400" rx="1" fill="#222"/></g>
<!-- knife -->
<path d="M8 324.500L8.500 321.500L14 314.300Q14.800 313.500 15.700 314.200L16.700 315Q17.400 315.800 16.800 316.600L11.300 323.600ZM9 320.800L12 323.200" fill="none" stroke="#2a5866" stroke-width="1.100" stroke-linejoin="round"/>
<!-- eyedropper -->
<path d="M6.500 349L7 346.500L13.500 340L15.500 342L9 348.500ZM12.500 339L16.500 343M14.500 341L16.300 338.200Q17 337 18 337.800Q18.800 338.700 17.700 339.600Z" fill="none" stroke="#8a8a8a" stroke-width="1" stroke-linejoin="round"/>
<!-- bottom bump -->
<path d="M24 487.500Q30.500 492 30.500 501.500Q30.500 511 24 515.500Z" fill="#fff"/>
<path d="M26 499L28.800 501.600L26 504.200Z" fill="#222"/>
<path class="id" d="M5.500 495Q5.500 493.800 6.700 493.800H10.300L12 495.600H17.600Q18.800 495.600 18.800 496.800V502.800Q18.800 504 17.600 504H6.700Q5.500 504 5.500 502.800Z" stroke-width="1.100"/>
</svg>
<span class="t" style="left:6.300px;top:242px;font-family:'Liberation Serif',serif;font-size:13px;color:#333b42">A</span>

<!-- PAGE -->
<svg style="left:0;top:0" width="800" height="533" viewBox="0 0 800 533">
<path d="M313.800 118.200L323.600 110L333.400 118.200H328.300V124.300H319V118.200Z" fill="#000"/>
<rect x="196" y="130.300" width="255" height="360" fill="#fff"/>
<path d="M196 130.300H451V172.500H407.600V149H240.300V172.300H196Z" fill="url(#hx)"/>
<rect x="196" y="434" width="44.200" height="56.300" fill="url(#hx)"/>
<rect x="215.300" y="149.200" width="216.300" height="310.400" fill="none" stroke="#f0a3a8" stroke-width=".8"/>
<!-- registration marks -->
<rect x="215.700" y="149.600" width="6.500" height="6.500" fill="#000"/>
<path d="M407.600 149.400H431.500V173" fill="none" stroke="#3a2424" stroke-width="1.400"/>
<path d="M215.600 435.500V459.400H240.200" fill="none" stroke="#3a2424" stroke-width="1.400"/>
<!-- barcode -->
<rect x="215.800" y="162.300" width="10.800" height="105.500" fill="#0a0a0a"/>
<path d="M215.800 164.500H226.600M215.800 172.800H226.600M215.800 179H226.600M215.800 186H226.600M215.800 192.500H226.600M215.800 199.500H226.600M215.800 206.500H226.600M215.800 213.500H226.600M215.800 221H226.600M215.800 228.500H226.600M215.800 235.800H226.600M215.800 242.800H226.600M215.800 249.800H226.600M215.800 256.500H226.600M215.800 262H226.600" stroke="#8c8c8c" stroke-width=".7"/>
</svg>

<!-- DESIGN -->
<svg style="left:0;top:0" width="800" height="533" viewBox="0 0 800 533">
<!-- mint branch -->
<g fill="#b4ded0" stroke="none">
<path d="M276.300 186.800Q282.500 199 279.800 211Q277 221.500 269 221.800Q262 220.500 262.800 210Q264.500 197.500 276.300 186.800Z"/>
<path d="M239 210.500Q249.500 211.500 254.500 221.500Q258.500 231 254.600 236.800Q248 239 243 230.500Q238 221.500 239 210.500Z"/>
<path d="M293.200 227.600Q290.500 238.500 282 244.500Q275 248.800 271.800 245.500Q271 239 278.500 233Q285.500 228 293.200 227.600Z"/>
<path d="M234.800 256.500Q246.500 258.500 252.500 266.500Q257 273.500 254.800 277Q248 279 241.500 272Q235.500 265 234.800 256.500Z"/>
<path d="M289.400 257.600Q289 268 283 276Q276 284 270.200 281.500Q267.500 275.500 274 267.500Q280.500 260 289.400 257.600Z"/>
</g>
<path d="M268.300 220Q263.500 234 259.800 247Q257.800 262 260.500 275Q265 295 274.500 315M254.500 236L260.200 247.500M272.500 245.500Q264 251 260 260M254.500 276.500L262.500 285M270.800 281Q266 288 265 296" fill="none" stroke="#b4ded0" stroke-width="1.500" stroke-linecap="round"/>
<!-- olive branch -->
<g fill="#a0a057">
<ellipse cx="310.400" cy="196.800" rx="7" ry="10.300" transform="rotate(8 310.400 196.800)"/>
<ellipse cx="327.200" cy="199.500" rx="7.300" ry="10.200" transform="rotate(22 327.200 199.500)"/>
<ellipse cx="302.600" cy="216.400" rx="7.300" ry="9.800" transform="rotate(-38 302.600 216.400)"/>
<ellipse cx="335.500" cy="212.200" rx="10" ry="7.300" transform="rotate(-22 335.500 212.200)"/>
<ellipse cx="326.600" cy="229.800" rx="8.800" ry="6.200" transform="rotate(-25 326.600 229.800)"/>
</g>
<path d="M313.300 247.500Q313.500 236 317.500 224.500Q320.500 215 324 207M317.500 224.500Q313.500 214 312 205M316 229Q310 224 305 220M317.800 223Q324 218.500 331 214.500M314.300 237.500Q319 233.500 323.500 231.500" fill="none" stroke="#a0a057" stroke-width="1.700" stroke-linecap="round"/>
<!-- feather -->
<path d="M415.400 190.800Q417.800 198 416.500 204Q414.500 213 410.400 220.600Q415 219.500 419.900 218.800Q418.500 222.500 415.400 225.500Q409.500 232 403 239Q406.500 239 410.400 239.700Q407.500 243 403 245.400Q393 252.300 381.500 258.900Q376 262 373.700 265.600Q371.800 270 371.400 275Q370.500 284 370.800 292.700Q370.500 296.500 368.600 295.800Q366.800 295 366.800 292Q366.500 284 367.600 277Q368.600 271 368.800 266.500Q367 260 365.800 254.400Q363.800 247 363.500 240.800Q363.200 234 364 230.700Q364.600 228 365.500 229Q366.800 232.500 368 235.200L369.800 239Q371 232 373.700 225Q376 218.500 379.300 213.800Q382 209.500 385.600 205.900Q385.500 210 386.500 213.800Q390 207.500 395 202.500Q399.500 197.500 405.200 193.500Q405.200 197.500 406.300 201.400Q410 195.500 415.400 190.800Z" fill="#b2dccf"/>
<!-- pink leaf -->
<path d="M333.500 272.600Q337.200 272.600 336.900 276.500Q336 284 330.500 290.500Q324.500 298 315 300.800Q308.300 302 307 296.500Q306.300 288.500 313.500 281Q322 273 333.500 272.600Z" fill="#ee7c84"/>
<!-- grey olive leaf -->
<path d="M252.500 300.500Q259.500 302.500 260.300 311Q260.500 322 251.500 330Q245 335.500 237 336.200Q235 325 239 313Q243.500 302 252.500 300.500Z" fill="#c5c99c"/>
<!-- yellow olive leaf -->
<path d="M242.200 355.500Q257 346 276 346.300Q298 347 315.500 362.500Q315.800 364.800 313.500 366Q296 373.500 278 373.600Q258 373 246 361Q242.800 358 242.200 355.500Z" fill="#dad99b"/>
<!-- teal grey leaf -->
<path d="M353.500 299.200Q356 311 349.500 325Q341 342 322.500 350Q318.500 351.500 317.800 346.500Q317.300 330 327 316Q337 302 353.500 299.200Z" fill="#add3c7"/>
<!-- coral branch -->
<g fill="none" stroke="#e36b74" stroke-linecap="round" stroke-linejoin="round">
<path d="M359.8 358.5Q368.8 357.3 375.7 353.8Q384.4 349.5 389.5 341.7Q395.1 333.9 398.2 326.2Q402.0 318.4 403.4 312.4Q404.6 307.2 404.2 302.0L402.0 296.0" stroke-width="2.200"/>
<path d="M379.2 354.2Q398.2 359.9 418.9 357.3" stroke-width="2.200"/>
<path d="M388.7 350.4Q384.4 340.0 382.6 332.2" stroke-width="1.800"/>
<path d="M397.3 291.6L399.9 296.9" stroke-width="5.8"/><path d="M399.9 296.9L402.0 301.1" stroke-width="3.2"/>
<path d="M406.5 295.1L404.8 298.9" stroke-width="5.8"/><path d="M404.8 298.9L403.4 302.0" stroke-width="3.2"/>
<path d="M408.5 305.8L406.2 308.9" stroke-width="5.2"/><path d="M406.2 308.9L404.2 311.5" stroke-width="2.9"/>
<path d="M412.9 309.3L408.6 311.0" stroke-width="5.2"/><path d="M408.6 311.0L405.1 312.4" stroke-width="2.9"/>
<path d="M395.1 315.0L398.5 319.7" stroke-width="6.3"/><path d="M398.5 319.7L401.3 323.6" stroke-width="3.4"/>
<path d="M395.6 304.6L398.9 308.4" stroke-width="5.2"/><path d="M398.9 308.4L401.6 311.5" stroke-width="2.9"/>
<path d="M409.9 318.9L405.8 321.5" stroke-width="5.5"/><path d="M405.8 321.5L402.5 323.6" stroke-width="3.0"/>
<path d="M412.9 324.5L405.9 328.7" stroke-width="5.5"/><path d="M405.9 328.7L400.3 332.2" stroke-width="3.0"/>
<path d="M396.1 328.8L397.1 332.1" stroke-width="4.8"/><path d="M397.1 332.1L397.8 334.8" stroke-width="2.6"/>
<path d="M407.7 338.6L401.0 340.8" stroke-width="5.5"/><path d="M401.0 340.8L395.6 342.6" stroke-width="3.0"/>
<path d="M406.5 348.3L398.6 350.4" stroke-width="6.3"/><path d="M398.6 350.4L392.1 352.1" stroke-width="3.4"/>
<path d="M380.6 326.2L383.1 331.9" stroke-width="5.8"/><path d="M383.1 331.9L385.2 336.5" stroke-width="3.2"/>
<path d="M390.4 329.6L388.5 333.9" stroke-width="4.8"/><path d="M388.5 333.9L387.0 337.4" stroke-width="2.6"/>
<path d="M392.1 333.4L389.9 337.5" stroke-width="4.4"/><path d="M389.9 337.5L388.2 340.9" stroke-width="2.4"/>
<path d="M375.4 338.3L379.8 343.0" stroke-width="5.5"/><path d="M379.8 343.0L383.5 346.9" stroke-width="3.0"/>
<path d="M373.1 344.3L377.4 347.6" stroke-width="5.2"/><path d="M377.4 347.6L380.9 350.4" stroke-width="2.9"/>
<path d="M390.4 349.5L386.1 350.4" stroke-width="4.0"/><path d="M386.1 350.4L382.6 351.2" stroke-width="2.2"/>
<path d="M419.8 356.9L412.6 358.1" stroke-width="5.8"/><path d="M412.6 358.1L406.8 359.0" stroke-width="3.2"/>
<path d="M413.7 364.5L409.0 362.0" stroke-width="5.5"/><path d="M409.0 362.0L405.1 359.9" stroke-width="3.0"/>
<path d="M382.6 364.2L382.6 359.9" stroke-width="5.8"/><path d="M382.6 359.9L382.6 356.4" stroke-width="3.2"/>
<path d="M393.9 366.8L391.5 362.0" stroke-width="5.8"/><path d="M391.5 362.0L389.5 358.1" stroke-width="3.2"/>
<path d="M406.8 366.8L402.5 362.5" stroke-width="5.8"/><path d="M402.5 362.5L399.0 359.0" stroke-width="3.2"/>
<path d="M407.7 355.2L403.4 356.8" stroke-width="4.0"/><path d="M403.4 356.8L399.9 358.1" stroke-width="2.2"/>
</g>
</svg>

<!-- PANEL -->
<div class="a" style="left:549.500px;top:97.300px;width:179.800px;height:255.200px;background:#fff;border-radius:5px 5px 3.500px 3.500px;box-shadow:0 3px 9px rgba(0,0,0,.36),0 0 2px rgba(0,0,0,.25)"></div>
<svg style="left:0;top:0" width="800" height="533" viewBox="0 0 800 533">
<path d="M549.500 114.500V102.200Q549.500 97.200 554.500 97.200H724.300Q729.300 97.200 729.300 102.200V114.500Z" fill="#1e1e1e"/>
<path d="M552.700 107.800L555.500 104.800L558.300 107.800" fill="none" stroke="#fff" stroke-width="1.200" stroke-linecap="round" stroke-linejoin="round"/>
<path d="M718 101.500L725.300 109.500M725.300 101.500L718 109.500" fill="none" stroke="#fff" stroke-width="1.200" stroke-linecap="round"/>
<!-- tab icons -->
<rect x="559.600" y="125.200" width="9.200" height="9.600" rx="1.200" fill="none" stroke="#333" stroke-width="1.100"/>
<g fill="#333"><circle cx="561.600" cy="127.300" r=".75"/><circle cx="566.700" cy="127.400" r=".65"/><circle cx="561.600" cy="132.700" r=".65"/></g>
<rect x="575" y="118" width="22.500" height="22.500" rx="4.500" fill="#23bdda"/>
<rect x="582.300" y="122" width="8" height="14.500" fill="#fff" rx=".8"/>
<path d="M582.300 125.500H590.300M582.300 128.800H590.300M582.300 132.300H590.300" stroke="#23bdda" stroke-width="1"/>
<path d="M553 143.800H727" stroke="#e4e4e4" stroke-width="1"/>
<path d="M556 244.300H723" stroke="#e4e4e4" stroke-width="1"/>
<path d="M556 297.500H723" stroke="#e4e4e4" stroke-width="1"/>
<!-- checkboxes -->
<rect x="553.300" y="182" width="15.400" height="15.600" rx="2.500" fill="#fff" stroke="#2a2a2a" stroke-width="1.400"/>
<path d="M556.800 190L559.800 193.600L565 185.300" fill="none" stroke="#111" stroke-width="1.700" stroke-linecap="round" stroke-linejoin="round"/>
<rect x="556.500" y="202.600" width="15.700" height="15.600" rx="2.800" fill="#fff" stroke="#2a2a2a" stroke-width="1.400"/>
<rect x="556.500" y="223.300" width="15.700" height="15.600" rx="2.800" fill="#fff" stroke="#2a2a2a" stroke-width="1.400"/>
<!-- buttons -->
<rect x="552.800" y="249.500" width="173.400" height="19.200" rx="4.500" fill="#fff" stroke="#e2e2e2" stroke-width="1"/>
<rect x="552.800" y="302.700" width="173.400" height="18.800" rx="4.500" fill="#fff" stroke="#e2e2e2" stroke-width="1"/>
<path d="M561.300 255.300V261.500Q561.300 262.800 562.600 262.800H566.300Q567.600 262.800 567.600 261.500V255.300M564.500 262.800V264.500L562.500 266.300H560.300M564.500 266.300H568.500" fill="none" stroke="#333" stroke-width="1.100" stroke-linecap="round" stroke-linejoin="round"/>
<path d="M560 310.500V307.500H568.500V310.500M560 316H558.800Q557.500 316 557.500 314.700V311.800Q557.500 310.500 558.800 310.500H569.700Q571 310.500 571 311.800V314.700Q571 316 569.700 316H568.500M560 314H568.500V318H560Z" fill="none" stroke="#333" stroke-width="1.100" stroke-linecap="round" stroke-linejoin="round"/>
</svg>
<span class="t" style="left:563px;top:101.800px;font-size:8.500px;color:#fff;transform:scaleX(.92)">Print &amp; Cut</span>
<span class="t" style="left:553px;top:153.1px;font-size:7.600px;color:#3c3c3c;transform:scaleX(0.974)">Barcode allows you to scan and then cut a barcoded</span>
<span class="t" style="left:553px;top:161.4px;font-size:7.600px;color:#3c3c3c;transform:scaleX(0.974)">Print &amp; Cut design without having to open it in</span>
<span class="t" style="left:553px;top:169.7px;font-size:7.600px;color:#3c3c3c;transform:scaleX(0.974)">Silhouette Studio.</span>
<span class="t" style="left:572px;top:185.9px;font-size:7.600px;color:#3c3c3c;transform:scaleX(0.928)">Enable Barcode</span>
<span class="t" style="left:576px;top:206.4px;font-size:7.600px;color:#3c3c3c;transform:scaleX(0.928)">Share barcode</span>
<span class="t" style="left:576px;top:227.1px;font-size:7.600px;color:#3c3c3c;transform:scaleX(0.982)">Backup barcode to library account</span>
<span class="t" style="left:599.500px;top:255.9px;width:80px;text-align:center;font-size:7.800px;font-weight:700;color:#333;transform-origin:50% 50%;transform:scaleX(.92)">Go to Send</span>
<span class="t" style="left:599.500px;top:308.9px;width:80px;text-align:center;font-size:7.800px;font-weight:700;color:#333;transform-origin:50% 50%;transform:scaleX(.92)">Print</span>
<span class="t" style="left:553px;top:275.9px;font-size:7.600px;color:#3c3c3c;transform:scaleX(0.971)">Set up your cut lines and material settings before</span>
<span class="t" style="left:553px;top:284.9px;font-size:7.600px;color:#3c3c3c;transform:scaleX(0.971)">printing.</span>
<span class="t" style="left:553px;top:328.9px;font-size:7.600px;color:#3c3c3c;transform:scaleX(0.979)">Each time you print your design, the Barcode file will</span>
<span class="t" style="left:553px;top:337.9px;font-size:7.600px;color:#3c3c3c;transform:scaleX(0.979)">be updated with your design and cut settings.</span>

<!-- RIGHT PANEL -->
<div class="a" style="left:752.300px;top:50.500px;width:47.700px;height:482.500px;background:#fff"></div>
<svg style="left:0;top:0" width="800" height="533" viewBox="0 0 800 533">
<g class="id" stroke-width="1.200">
<!-- r1 page -->
<path d="M758.800 74.100H770.500Q771.200 74.100 771.200 74.800V84.300L766.700 88.600H758.800Q758.100 88.600 758.100 87.900V74.800Q758.100 74.100 758.800 74.100Z" stroke-width="1.100"/><path d="M771.200 84.300H767.400Q766.700 84.300 766.700 85V88.600" stroke-width=".9"/><path d="M768 88L770.600 85.400V88Z" fill="#333b42" stroke="none"/>
<!-- r1c2 hearts box -->
<rect x="780.200" y="73.500" width="15.300" height="15" fill="#f0f0f0" stroke="#dcdcdc" stroke-width=".8"/>
<path d="M788.600 81.300L785 77.200Q783.500 76 782.300 77.300Q781 79 782.600 80.300L783.600 81.300L782.600 82.300Q781 83.600 782.300 85.300Q783.500 86.600 785 85.400Z" stroke-width="1.100"/>
<path d="M788.300 75.800L793.500 76.300Q795.500 77.300 794.800 79.200Q793.800 80.800 792 80ZM788.300 86.800L793.500 86.300Q795.500 85.300 794.800 83.400Q793.800 81.800 792 82.600Z" stroke-width="1"/>
<!-- r2 palette -->
<path d="M764.300 98Q758 98.300 757.300 104Q757 110.500 763.500 111Q766.500 111 766.300 108.800Q766.300 106.800 768.500 106.800Q771.800 106.800 771.800 103.800Q771.300 98 764.300 98Z"/>
<g fill="#333b42" stroke="none"><circle cx="760" cy="104.500" r=".7"/><circle cx="761" cy="101.500" r=".7"/><circle cx="763.800" cy="100.200" r=".7"/><circle cx="760.800" cy="107.500" r=".7"/><circle cx="763.500" cy="108.800" r=".7"/></g>
<!-- r2c2 globe -->
<circle cx="788" cy="104.300" r="7.200"/><path d="M788 97.100V111.500M780.800 104.300H795.200M785 97.800Q783 104.300 785 110.800M791 97.800Q793 104.300 791 110.800M781.800 101Q788 102.500 794.200 101M781.800 107.600Q788 106.100 794.200 107.600" stroke-width=".9"/>
<!-- r3 lines -->
<path d="M757.900 125H771.100" stroke-width="2.300" stroke-linecap="butt"/><path d="M757.900 129.800H771.100" stroke-width="1.700" stroke-linecap="butt"/><path d="M757.900 133.800H771.100" stroke="#6a7076" stroke-width="1.300" stroke-dasharray="2.600 2.700" stroke-linecap="butt"/>
<!-- r3c2 layers -->
<path d="M781.300 136V124.400L791 119.600M789.300 119.300L791.200 119.500L790.600 121.300M781.300 134.200L782 136.200L783.800 135.300" stroke-width="1"/><path d="M784.900 126.200L794.800 121.700V133.400L784.900 138.300Z" stroke-width="1.100"/><path d="M786.400 128.400L792.200 125.600V131.600L786.400 134.500Z" fill="#333b42" stroke-width=".6"/>
<!-- r4 trace -->
<rect x="757" y="145.400" width="14.600" height="14.600" rx="2.300" stroke-width="1.200"/><path d="M760 152.500L763.500 148.200Q765.500 147.300 766.300 149.200L765 151.300L769.300 154.500L768 157.500L764.500 157L760 152.500Z" fill="#4a5158" stroke-width=".8"/><circle cx="766.500" cy="155" r=".8" fill="#fff" stroke="none"/>
<!-- r4c2 warp grid -->
<path d="M781.500 147.200Q785 146.500 788 148Q791.500 149.800 794.800 147.500V157.500Q791.500 159.500 788 158Q785 156.800 781.500 158.300ZM785.800 147V157.500M790.300 149V158.800M781.500 150.800Q785 150 788 151.600Q791.500 153.300 794.800 151M781.500 154.500Q785 153.500 788 154.800Q791.500 156.300 794.800 154.300" stroke-width="1"/>
<!-- r5 align -->
<path d="M757.200 176.500H771.200" stroke-width="1"/><rect x="759" y="171.900" width="2.400" height="9.300" rx="1.100" fill="#fff" stroke-width="1"/><rect x="767.400" y="171.900" width="2.400" height="9.300" rx="1.100" fill="#fff" stroke-width="1"/><rect x="763" y="173.700" width="2.700" height="5.700" rx="1.200" fill="#fff" stroke-width="1"/>
<!-- r5c2 Ab box -->
<path d="M779.600 170H789V183.500H779.600ZM789 171.800H796.600V183.500H789" stroke="#555" stroke-width="1"/>
<!-- r6 star -->
<path d="M763.300 192.900L765.800 197.500L771.800 196.500L768.300 200.800L771 206.300L765.300 204.800L761.500 207.600L761.300 202.500L757 199.800L762 198Z" stroke-width="1"/><path d="M762 198L768.300 200.800M765.800 197.500L761.300 202.500M765.300 204.800L762 198M768.300 200.800L761.300 202.500" stroke-width=".8"/>
<!-- r6c2 triangle pattern -->
<path d="M780.300 192.300H796V206.500Q792 208.500 788 206.500Q784 204.800 780.300 206.500Z" stroke-width="1.100"/>
<path d="M782.500 198.500L784.800 194.500L787 198.500ZM789.200 194.500H793.800L791.500 198.500ZM782.500 204.500L784.800 200.500L787 204.500ZM789.200 200.500H793.800L791.500 204.500Z" stroke-width=".8"/>
<!-- r9 modify -->
<circle cx="768.300" cy="268.300" r="5.800" stroke-width="1.100"/><rect x="755.300" y="269.700" width="12.300" height="9.600" fill="#fff" stroke-width="1.600" rx=".3"/>
<path d="M767.600 274A5.800 5.800 0 0 1 762.800 269.700" stroke-width="1.100"/>
<!-- r10 star offset -->
<path d="M764.800 287.800L767 292.600L772.300 293.200L768.400 296.800L769.500 302L764.800 299.400L760.100 302L761.200 296.800L757.300 293.200L762.600 292.600Z" stroke="#5a6066" stroke-width="2.500"/>
<path d="M764.800 287.800L767 292.600L772.300 293.200L768.400 296.800L769.500 302L764.800 299.400L760.100 302L761.200 296.800L757.300 293.200L762.600 292.600Z" stroke="#c9ccd0" stroke-width=".7"/>
<!-- r11 sketch -->
<path d="M757.700 318.200Q763 312.500 768.300 311.600Q769.500 312 768 314Q763 319 759.700 322.600Q765 317.500 770.800 316Q772 316.500 770.500 318.500L764.800 324.500Q768.500 321 771.600 321Q772.500 322.500 771 325" stroke-width="1.250"/>
<!-- r12 blade -->
<path d="M759.700 338V346L762.300 348.300H765.700L768.300 346V341.500" stroke-width="1.150"/><path d="M762.800 349.300H765.200L764 350.800Z" fill="#333b42" stroke="none"/><path d="M770 334.300V338.500M767.900 336.400H772.100" stroke-width=".9"/>
<!-- r13 pix -->
<rect x="757.200" y="359.300" width="15.300" height="15" rx=".5" stroke-width="1.200"/>
<g fill="#333b42" stroke="none"><rect x="758.500" y="360.600" width="1.600" height="1.600"/><rect x="769.600" y="360.600" width="1.600" height="1.600"/><rect x="758.500" y="371.400" width="1.600" height="1.600"/><rect x="769.600" y="371.400" width="1.600" height="1.600"/></g>
<!-- r14 half circle -->
<circle cx="764" cy="390.300" r="7" stroke-width="1.200"/><path d="M764 383.300V397.300M764 385.500H769M764 387.500H770.500M764 389.500H771M764 391.500H771M764 393.500H770.500M764 395.500H769" stroke-width=".8"/>
<!-- r15 script A -->
<path d="M757 419Q759.600 413 760.800 407.800Q762 413 762.400 419.200M757.300 414.800Q761 412.300 765 413.600M763.200 416.300Q764 420 767 419.200Q769 418.600 770.300 417" stroke-width="1"/><path d="M765.200 414.500L770.200 408Q771.100 407.200 771.700 408.300L767.200 414.900Z" stroke-width=".9"/>
<!-- r16 offset/shadow -->
<rect x="757.600" y="431.700" width="11.300" height="10.600" rx="1" stroke-width="1.200"/><path d="M760.500 436.200H767.500V441.600H760.500ZM768.900 438.500L772.500 443.400H760.500L758.500 442.300" stroke-width="1"/>
<!-- r17 puzzle -->
<path d="M759.500 459.500H762Q761 456.500 764 456.300Q767 456.500 766 459.500H769.500V462.500Q772.500 461.500 772.700 464.200Q772.500 467 769.500 466V469H766.300Q767 466.500 764.500 466.500Q762 466.500 762.500 469H759.500V466Q757 467 756.800 464.500Q757 461.800 759.500 462.800Z" stroke-width="1"/>
</g>
<!-- selected -->
<rect x="752" y="235.800" width="23.300" height="23.200" rx="3.500" fill="#23bdda"/>
<rect x="756.300" y="240" width="15.400" height="14.800" rx="1" fill="none" stroke="#fff" stroke-width="1.400"/>
<path d="M759 244.500V242.800H760.800M767 242.800H769V244.800M759 250V252H761" fill="none" stroke="#fff" stroke-width="1.100"/>
<!-- bottom -->
<path d="M752.300 489.300H800" stroke="#555" stroke-width="1.100"/>
<path d="M772.500 496H782" stroke="#111" stroke-width="1.800"/>
<g fill="none" stroke="#23bdda" stroke-width="1.100">
<circle cx="758.500" cy="528.300" r="1.600"/><path d="M758.500 523.600Q760.500 523.600 760.700 525.200Q762.500 524.800 763 526.800Q762.800 528.300 763 529.800Q762.500 531.800 760.700 531.400Q760.500 533 758.500 533Q756.500 533 756.300 531.400Q754.500 531.800 754 529.800Q754.200 528.300 754 526.800Q754.500 524.800 756.300 525.200Q756.500 523.600 758.500 523.600Z"/>
<circle cx="794.500" cy="528.300" r="4.600"/><path d="M793.500 524.500Q797.500 528.300 793.500 532.200Q791 528.300 793.500 524.500Z" fill="#23bdda"/>
</g>
</svg>
<span class="t" style="left:758.300px;top:220px;font-family:'Liberation Serif',serif;font-size:12px;color:#333b42;transform:scaleX(.95)">A</span>
<span class="t" style="left:765.500px;top:220.500px;font-family:'Liberation Sans',sans-serif;font-size:7.500px;font-weight:700;color:#333b42">a</span>
<span class="t" style="left:758.800px;top:363px;font-size:9px;color:#333b42;transform:scaleX(.9)">Pix</span>
<span class="t" style="left:781.300px;top:172.500px;font-size:10px;color:#c4c4c4;transform:scaleX(.9)">A</span>
<span class="t" style="left:789.500px;top:173.500px;font-size:9px;color:#c4c4c4;transform:scaleX(.9)">b</span>
<span class="t" style="left:760.900px;top:502px;font-size:8.500px;color:#444;transform:scaleX(.815)">Show less</span>
</body></html>
